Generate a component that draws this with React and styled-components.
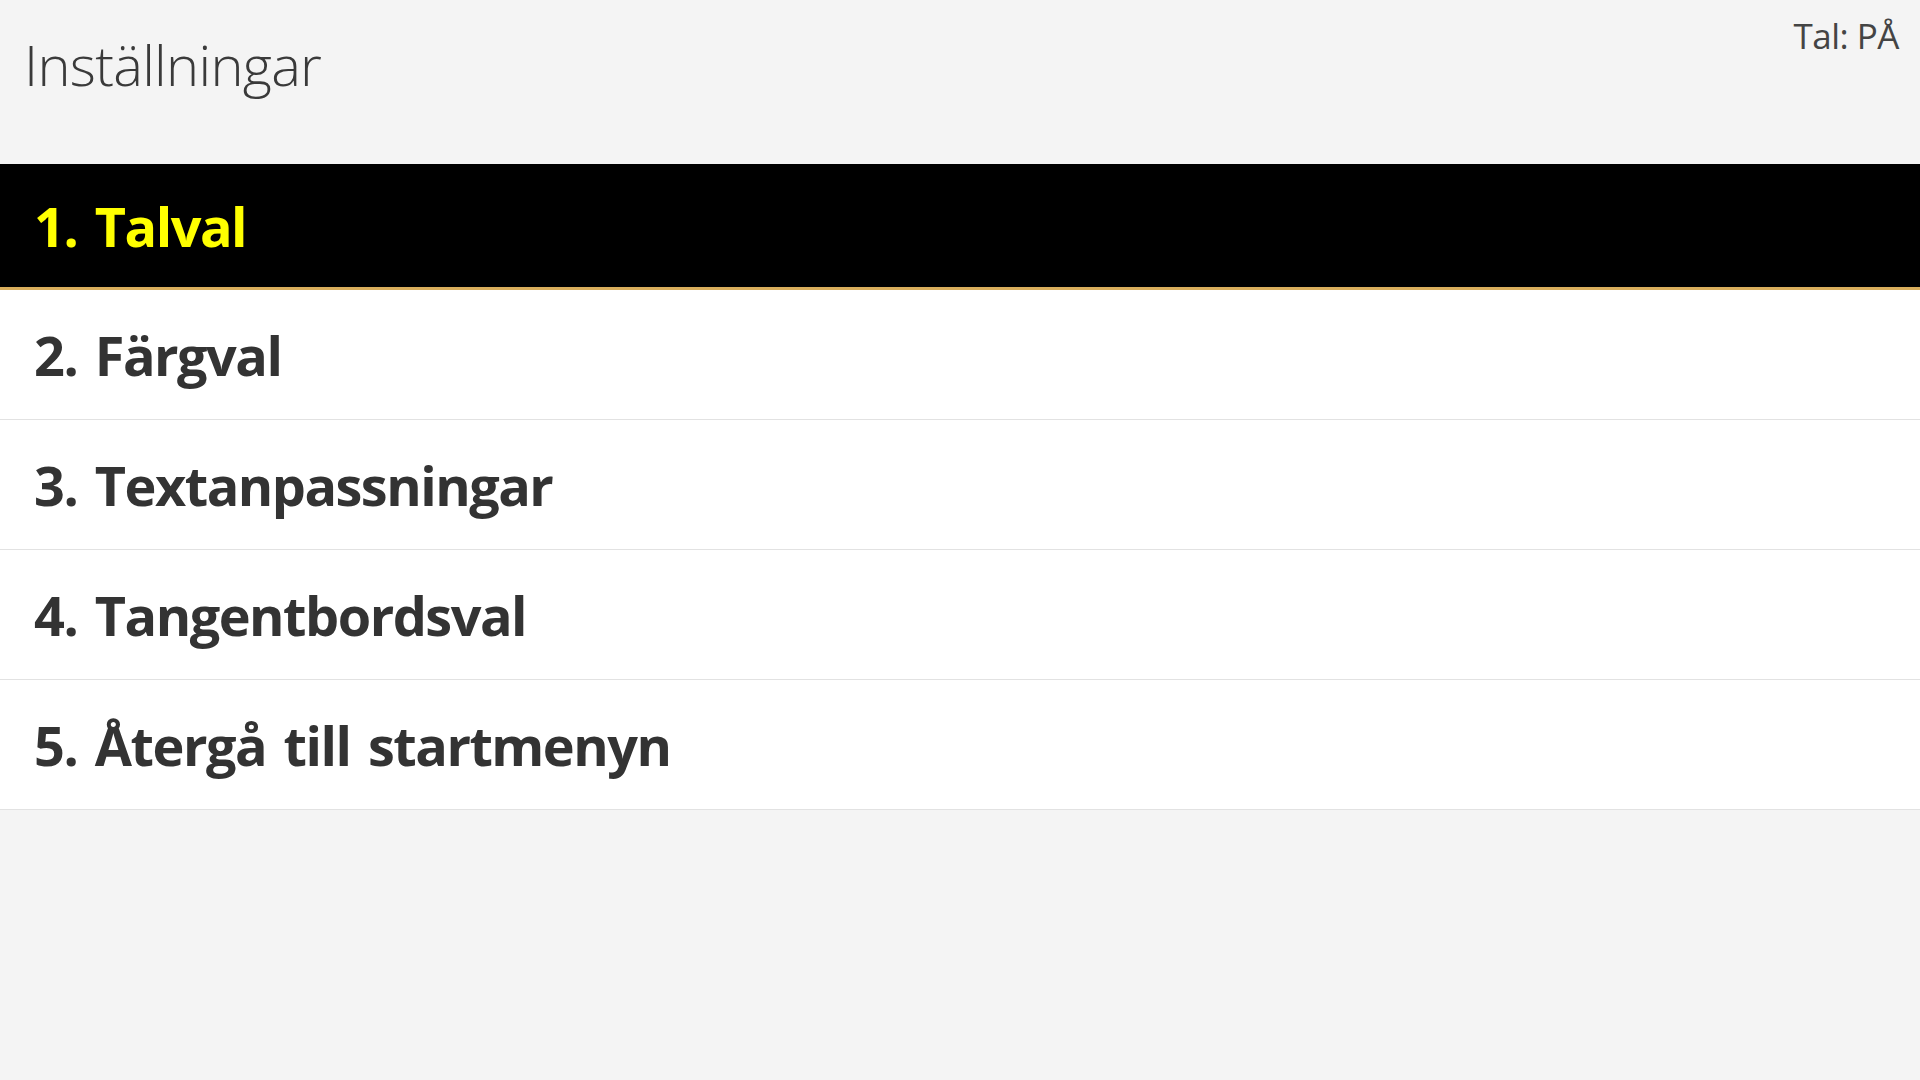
import React from 'react'
import styled, { createGlobalStyle } from 'styled-components'

const GlobalStyle = createGlobalStyle`
  html, body {
    margin: 0;
    padding: 0;
    background: #f4f4f4;
  }
  body {
    font-family: "Open Sans", "Noto Sans", "Liberation Sans", sans-serif;
    color: #333;
  }
`

const Page = styled.div`
  min-height: 1080px;
  background: #f4f4f4;
`

// sidhuvud med rubrik och talstatus
const Header = styled.header`
  display: flex;
  justify-content: space-between;
  align-items: flex-start;
  height: 164px;
  box-sizing: border-box;
  padding: 0 21px 0 24px;
`

const Title = styled.h1`
  margin: 26px 0 0;
  font-size: 56px;
  font-weight: 300;
  line-height: 76px;
  color: #3a3a3a;
  letter-spacing: -0.7px;
`

const Status = styled.div`
  margin-top: 12px;
  font-size: 35px;
  font-weight: 400;
  line-height: 48px;
  color: #444;
  letter-spacing: -0.5px;
`

const Menu = styled.ul`
  list-style: none;
  margin: 0;
  padding: 0;
`

const Item = styled.li`
  display: flex;
  align-items: center;
  height: ${p => (p.$active ? '126px' : '130px')};
  box-sizing: border-box;
  padding: 0 34px;
  background: ${p => (p.$active ? '#000' : '#fff')};
  color: ${p => (p.$active ? '#ffff00' : '#333')};
  border-bottom: ${p => (p.$active ? '3px solid #d9ae5c' : '1px solid #e2e2e2')};
  font-size: 54px;
  font-weight: 700;
  letter-spacing: -1.5px;
  word-spacing: 5px;
`

const items = [
  '1. Talval',
  '2. Färgval',
  '3. Textanpassningar',
  '4. Tangentbordsval',
  '5. Återgå till startmenyn'
]

const App = () => <Page>
  <GlobalStyle />
  <Header>
    <Title>Inställningar</Title>
    <Status>Tal: PÅ</Status>
  </Header>
  <Menu>
    {items.map((label, i) => <Item key={label} $active={i === 0}>{label}</Item>)}
  </Menu>
</Page>

export default App
